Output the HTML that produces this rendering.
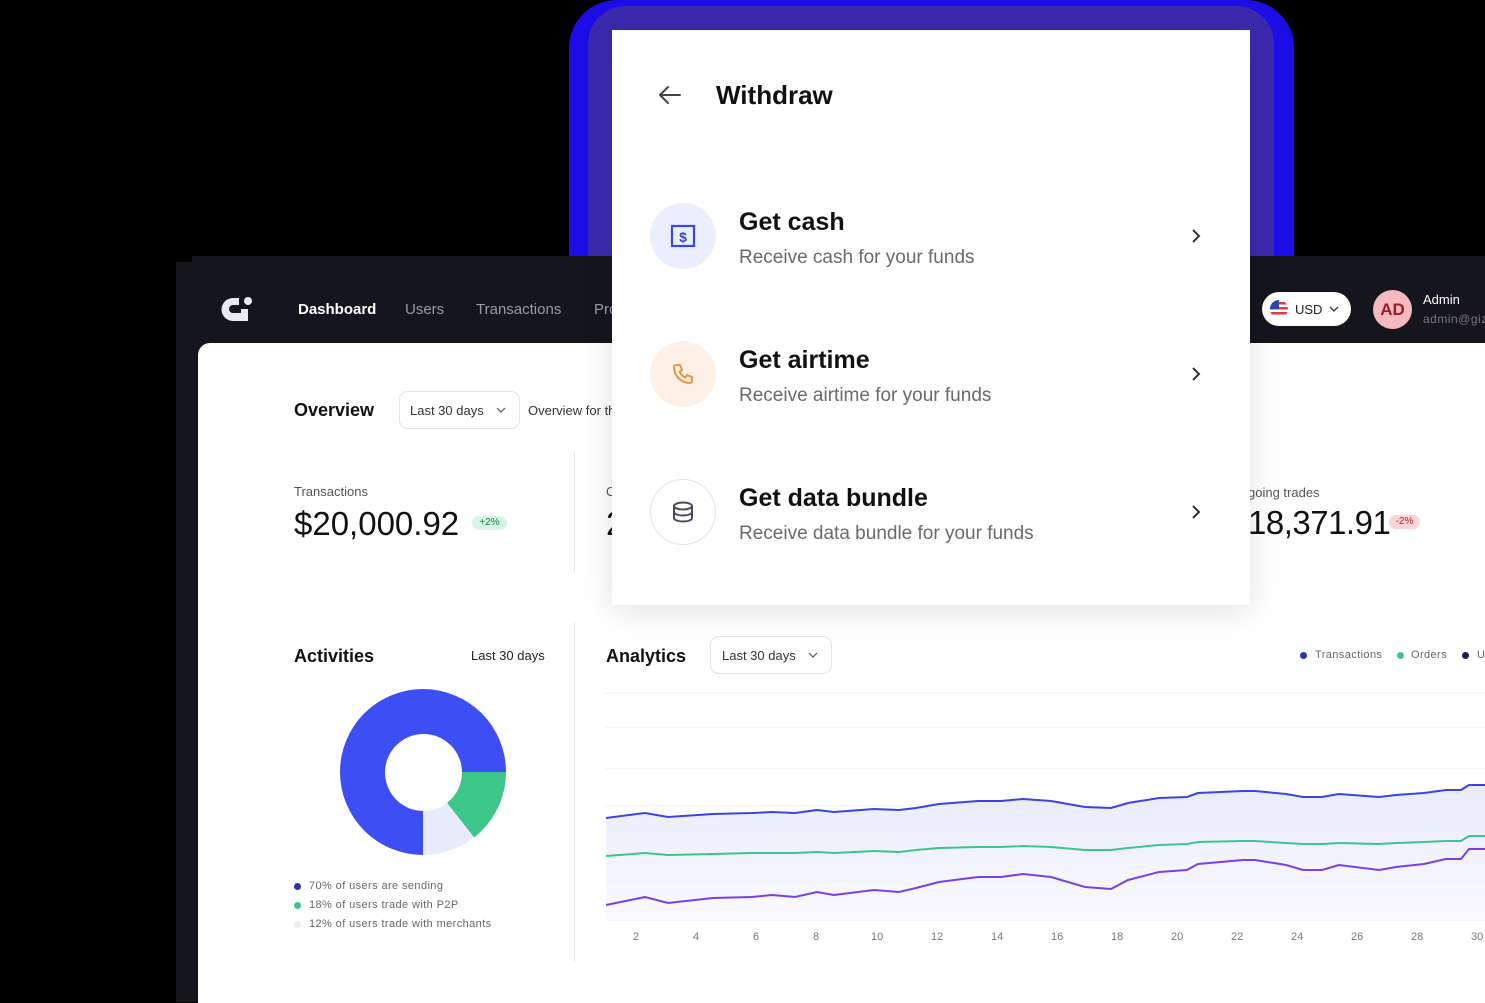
<!DOCTYPE html>
<html><head><meta charset="utf-8"><style>
*{margin:0;padding:0;box-sizing:border-box}
body{width:1485px;height:990px;background:#000;position:relative;overflow:hidden;font-family:"Liberation Sans",sans-serif}
.a{position:absolute;white-space:nowrap}
.frame{position:absolute;left:569px;top:0px;width:725px;height:330px;border-radius:48px;background:#1c0de6}
.frame2{position:absolute;left:588px;top:6px;width:686px;height:320px;border-radius:38px;background:#3a2aae}
.dash{position:absolute;left:176px;top:262px;width:1320px;height:740px;background:#15151d}
.dash2{position:absolute;left:192px;top:256px;width:1300px;height:20px;background:#15151d}
.content{position:absolute;left:198px;top:343px;width:1300px;height:660px;background:#fff;border-top-left-radius:12px}
.nav{color:#9a9aaa;font-size:15px;top:301px}
.dd{position:absolute;border:1px solid #e3e3e8;border-radius:9px;background:#fff;font-size:13px;color:#333}
.card{position:absolute;left:612px;top:30px;width:638px;height:575px;background:#fff;box-shadow:0 6px 30px rgba(0,0,0,0.12)}
.ic{position:absolute;left:650px;width:66px;height:66px;border-radius:50%}
.t{font-size:25px;font-weight:bold;color:#111;left:739px}
.s{font-size:19px;color:#6a6a6a;left:739px}
.leg{font-size:11px;color:#666;letter-spacing:.4px}
.dot{position:absolute;width:7px;height:7px;border-radius:50%}
.xl{font-size:11px;color:#777;top:931px}
.big{font-size:33px;color:#111}
</style></head><body>
<div class="frame"></div><div class="frame2"></div>
<div class="dash2"></div><div class="dash"></div>
<svg class="a" style="left:220px;top:296px" width="34" height="27" viewBox="0 0 34 27"><path d="M13 2h6v7h-6a4 4 0 0 0 0 8h8v-4h7v12h-15a11 11 0 0 1 0-23z" fill="#e8e8f4"/><circle cx="28" cy="5" r="4" fill="#e8e8f4"/></svg>
<div class="a nav" style="left:298px;color:#fff;font-weight:bold">Dashboard</div>
<div class="a nav" style="left:405px">Users</div>
<div class="a nav" style="left:476px">Transactions</div>
<div class="a nav" style="left:594px">Products</div>
<div class="a" style="left:1262px;top:292px;width:89px;height:34px;background:#fff;border-radius:17px"></div>
<svg class="a" style="left:1269px;top:299px" width="20" height="20" viewBox="0 0 20 20"><clipPath id="c"><circle cx="10" cy="10" r="9"/></clipPath><g clip-path="url(#c)"><rect width="20" height="20" fill="#fff"/><rect y="3" width="20" height="2.5" fill="#e03a3e"/><rect y="8" width="20" height="2.5" fill="#e03a3e"/><rect y="13" width="20" height="2.5" fill="#e03a3e"/><rect width="10" height="10" fill="#2b4aa8"/></g></svg>
<div class="a" style="left:1295px;top:302px;font-size:13px;color:#222">USD</div>
<svg class="a" style="left:1329px;top:305px" width="10" height="8"><path d="M1 2l4 4 4-4" stroke="#333" fill="none" stroke-width="1.3"/></svg>
<div class="a" style="left:1373px;top:290px;width:39px;height:39px;border-radius:50%;background:#f5b9bf;color:#9b1c24;font-weight:bold;font-size:17px;text-align:center;line-height:39px">AD</div>
<div class="a" style="left:1423px;top:292px;font-size:13px;color:#fff">Admin</div>
<div class="a" style="left:1423px;top:312px;font-size:12px;color:#777;letter-spacing:.5px">admin@gizmo.com</div>

<div class="content"></div>
<div class="a" style="left:294px;top:400px;font-size:18px;font-weight:bold;color:#111">Overview</div>
<div class="dd" style="left:399px;top:391px;width:121px;height:38px"><span class="a" style="left:10px;top:11px">Last 30 days</span><svg class="a" style="left:96px;top:14px" width="10" height="8"><path d="M1 2l4 4 4-4" stroke="#555" fill="none" stroke-width="1.2"/></svg></div>
<div class="a" style="left:528px;top:403px;font-size:13px;color:#333">Overview for the last 30 days</div>
<div class="a" style="left:574px;top:452px;width:1px;height:120px;background:#e5e5ea"></div>
<div class="a" style="left:574px;top:622px;width:1px;height:340px;background:#e5e5ea"></div>
<div class="a" style="left:294px;top:484px;font-size:13px;color:#555">Transactions</div>
<div class="a big" style="left:294px;top:505px">$20,000.92</div>
<div class="a" style="left:472px;top:516px;width:35px;height:14px;border-radius:7px;background:#d5f5e6;font-size:10px;color:#15803d;text-align:center;line-height:14px">+2%</div>
<div class="a" style="left:606px;top:484px;font-size:13px;color:#555">Orders</div>
<div class="a big" style="left:606px;top:505px">2,000</div>
<div class="a" style="left:1248px;top:485px;font-size:13px;color:#555">going trades</div>
<div class="a big" style="left:1248px;top:504px;letter-spacing:-0.5px">18,371.91</div>
<div class="a" style="left:1389px;top:515px;width:31px;height:14px;border-radius:7px;background:#fbd5d8;font-size:10px;color:#b91c1c;text-align:center;line-height:14px">-2%</div>

<div class="a" style="left:294px;top:646px;font-size:18px;font-weight:bold;color:#111">Activities</div>
<div class="a" style="left:471px;top:648px;font-size:13px;color:#222">Last 30 days</div>
<div class="a" style="left:340px;top:689px;width:166px;height:166px;border-radius:50%;background:conic-gradient(#3d4ef5 0deg 90deg,#3cc68a 90deg 142deg,#e8ebfa 142deg 180deg,#3d4ef5 180deg 360deg)"></div>
<div class="a" style="left:385px;top:734px;width:77px;height:77px;border-radius:50%;background:#fff"></div>
<div class="dot" style="left:294px;top:883px;background:#2a33a8"></div><div class="a leg" style="left:309px;top:880px">70% of users are sending</div>
<div class="dot" style="left:294px;top:902px;background:#3cc68a"></div><div class="a leg" style="left:309px;top:899px">18% of users trade with P2P</div>
<div class="dot" style="left:294px;top:921px;background:#e8ebfa"></div><div class="a leg" style="left:309px;top:918px">12% of users trade with merchants</div>

<div class="a" style="left:606px;top:646px;font-size:18px;font-weight:bold;color:#111">Analytics</div>
<div class="dd" style="left:710px;top:636px;width:122px;height:38px"><span class="a" style="left:11px;top:11px">Last 30 days</span><svg class="a" style="left:97px;top:14px" width="10" height="8"><path d="M1 2l4 4 4-4" stroke="#555" fill="none" stroke-width="1.2"/></svg></div>
<div class="dot" style="left:1300px;top:652px;background:#2a33a8"></div><div class="a leg" style="left:1315px;top:649px">Transactions</div>
<div class="dot" style="left:1397px;top:652px;background:#3cc68a"></div><div class="a leg" style="left:1411px;top:649px">Orders</div>
<div class="dot" style="left:1462px;top:652px;background:#1e1b5a"></div><div class="a leg" style="left:1477px;top:649px">Users</div>
<svg class="a" style="left:0;top:0" width="1485" height="990">
<defs><linearGradient id="g" x1="0" y1="0" x2="0" y2="1"><stop offset="0" stop-color="#e4e6fb"/><stop offset="1" stop-color="#f8f8fe"/></linearGradient></defs>
<g stroke="#efeff3" stroke-width="1"><line x1="605" y1="693" x2="1485" y2="693"/><line x1="605" y1="727" x2="1485" y2="727"/><line x1="605" y1="769" x2="1485" y2="769"/><line x1="605" y1="806" x2="1485" y2="806"/><line x1="605" y1="844" x2="1485" y2="844"/><line x1="605" y1="882" x2="1485" y2="882"/><line x1="605" y1="920" x2="1485" y2="920"/></g>
<polygon fill="url(#g)" opacity=".8" points="606,920 606,818 645,813 668,817 713,814 752,813 772,812 795,813 817,810 834,812 874,809 899,810 916,808 939,804 978,801 1001,801 1023,799 1051,801 1085,807 1111,808 1128,803 1159,798 1187,797 1198,793 1243,791 1255,791 1286,794 1303,797 1322,797 1339,794 1379,797 1396,795 1424,793 1446,790 1461,790 1469,785 1485,785 1485,920"/>
<polyline fill="none" stroke="#3a44e0" stroke-width="2" points="606,818 645,813 668,817 713,814 752,813 772,812 795,813 817,810 834,812 874,809 899,810 916,808 939,804 978,801 1001,801 1023,799 1051,801 1085,807 1111,808 1128,803 1159,798 1187,797 1198,793 1243,791 1255,791 1286,794 1303,797 1322,797 1339,794 1379,797 1396,795 1424,793 1446,790 1461,790 1469,785 1485,785"/>
<polyline fill="none" stroke="#3cc68a" stroke-width="2" points="606,856 645,853 668,855 713,854 752,853 772,853 795,853 817,852 834,853 874,851 899,852 916,850 939,848 978,847 1001,847 1023,846 1051,847 1085,850 1111,850 1128,848 1159,845 1187,844 1198,842 1243,841 1255,841 1286,843 1303,844 1322,844 1339,843 1379,844 1396,843 1424,842 1446,841 1461,841 1469,836 1485,836"/>
<polyline fill="none" stroke="#7b3fe4" stroke-width="2" points="606,905 645,897 668,903 713,898 752,897 772,895 795,897 817,892 834,895 874,890 899,892 916,888 939,882 978,877 1001,877 1023,874 1051,877 1085,887 1111,889 1128,880 1159,872 1187,870 1198,864 1243,860 1255,860 1286,865 1303,870 1322,870 1339,865 1379,870 1396,867 1424,864 1446,859 1461,859 1469,849 1485,849"/>
</svg>
<div class="a xl" style="left:633px">2</div><div class="a xl" style="left:693px">4</div><div class="a xl" style="left:753px">6</div><div class="a xl" style="left:813px">8</div><div class="a xl" style="left:871px">10</div><div class="a xl" style="left:931px">12</div><div class="a xl" style="left:991px">14</div><div class="a xl" style="left:1051px">16</div><div class="a xl" style="left:1111px">18</div><div class="a xl" style="left:1171px">20</div><div class="a xl" style="left:1231px">22</div><div class="a xl" style="left:1291px">24</div><div class="a xl" style="left:1351px">26</div><div class="a xl" style="left:1411px">28</div><div class="a xl" style="left:1471px">30</div>

<div class="card"></div>
<svg class="a" style="left:658px;top:85px" width="24" height="20" viewBox="0 0 24 20"><path d="M22 10H3M10 2L2 10l8 8" stroke="#444" stroke-width="2" fill="none" stroke-linecap="round" stroke-linejoin="round"/></svg>
<div class="a" style="left:716px;top:80px;font-size:26px;font-weight:bold;color:#111">Withdraw</div>

<div class="ic" style="top:203px;background:#ebeefc"></div>
<svg class="a" style="left:670px;top:224px" width="26" height="24" viewBox="0 0 26 24"><rect x="2" y="2" width="22" height="20" fill="none" stroke="#3a46e0" stroke-width="2.2"/><text x="13" y="18" font-size="14" font-weight="bold" fill="#3a46e0" text-anchor="middle" font-family="Liberation Sans">$</text></svg>
<div class="a t" style="top:208px">Get cash</div>
<div class="a s" style="top:247px">Receive cash for your funds</div>
<div class="ic" style="top:341px;background:#fdf0e6"></div>
<svg class="a" style="left:671px;top:362px" width="24" height="24" viewBox="0 0 24 24"><path d="M5 3h4l2 5-2.5 1.5a11 11 0 0 0 6 6L16 13l5 2v4a2 2 0 0 1-2 2A16 16 0 0 1 3 5a2 2 0 0 1 2-2" fill="none" stroke="#f0893a" stroke-width="1.8" stroke-linejoin="round"/></svg>
<div class="a t" style="top:346px">Get airtime</div>
<div class="a s" style="top:385px">Receive airtime for your funds</div>
<div class="ic" style="top:479px;background:#fff;border:1px solid #e3e3e8"></div>
<svg class="a" style="left:671px;top:500px" width="24" height="24" viewBox="0 0 24 24"><ellipse cx="12" cy="6" rx="9" ry="3.5" fill="none" stroke="#4a4a5e" stroke-width="2"/><path d="M3 6v12c0 2 4 3.5 9 3.5s9-1.5 9-3.5V6M3 12c0 2 4 3.5 9 3.5s9-1.5 9-3.5" fill="none" stroke="#4a4a5e" stroke-width="2"/></svg>
<div class="a t" style="top:484px">Get data bundle</div>
<div class="a s" style="top:523px">Receive data bundle for your funds</div>
<svg class="a" style="left:1190px;top:228px" width="14" height="16"><path d="M3 2l6 6-6 6" stroke="#333" stroke-width="2" fill="none"/></svg>
<svg class="a" style="left:1190px;top:366px" width="14" height="16"><path d="M3 2l6 6-6 6" stroke="#333" stroke-width="2" fill="none"/></svg>
<svg class="a" style="left:1190px;top:504px" width="14" height="16"><path d="M3 2l6 6-6 6" stroke="#333" stroke-width="2" fill="none"/></svg>
</body></html>
